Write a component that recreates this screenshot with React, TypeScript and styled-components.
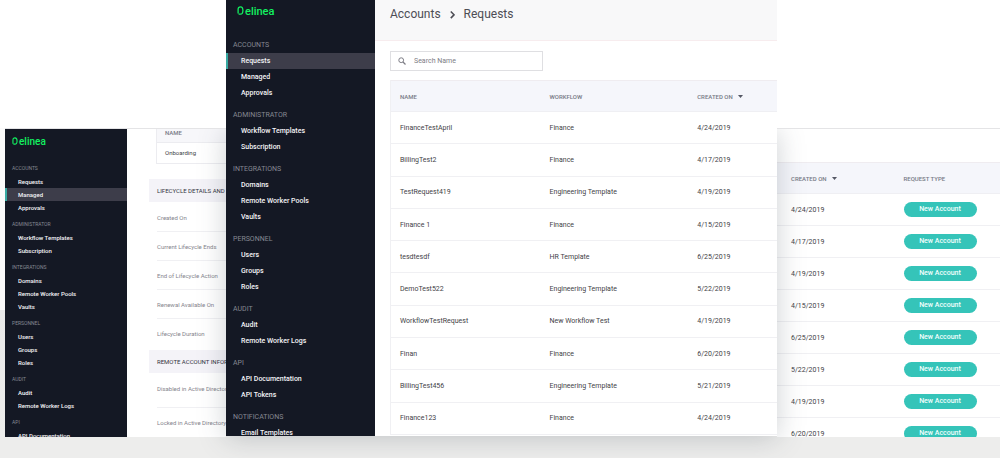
import React from "react";
import styled, { createGlobalStyle, css } from "styled-components";

const GlobalStyle = createGlobalStyle`
  *, *::before, *::after { box-sizing: border-box; }
  html, body { margin: 0; }
  body {
    font-family: Roboto, "Liberation Sans", sans-serif;
    background: #ededec;
    overflow: hidden;
  }
`;

const Stage = styled.main`
  display: grid;
  grid-template-columns: minmax(0, 221fr) minmax(0, 551fr) minmax(0, 223fr);
  align-items: end;
  padding: 0 0 21px 5px;
  background: linear-gradient(#ffffff 128px, #fbfbfb 128px, #fbfbfb 310px, #e9e9e9 310px, #ededec 437px);
`;

const Window = styled.section<{ $front?: boolean }>`
  display: flex;
  overflow: hidden;
  background: #ffffff;
  height: 309px;
  border-top: 1px solid #e4e4e6;
  ${(p) =>
    p.$front &&
    css`
      position: relative;
      z-index: 1;
      overflow: visible;
      height: 436px;
      border-top: 0;
      margin-bottom: 1px;

      /* The shadow only falls on the windows behind, not on the page above them. */
      &::before {
        content: "";
        position: absolute;
        inset: 129px 0 0;
        z-index: -1;
        box-shadow: 0 2px 26px rgba(60, 75, 85, 0.26);
        clip-path: inset(0 -40px -40px -40px);
      }
    `}
`;

const Sidebar = styled.aside<{ $compact?: boolean }>`
  flex: none;
  overflow: hidden;
  width: ${(p) => (p.$compact ? 122 : 149)}px;
  background: #141824;
  padding-top: ${(p) => (p.$compact ? 6 : 5)}px;
`;

const Brand = styled.a<{ $compact?: boolean }>`
  display: flex;
  align-items: baseline;
  gap: 1px;
  height: 14px;
  margin: ${(p) => (p.$compact ? "0 0 13px 7px" : "0 0 18px 11px")};
  color: #12f160;
  font-size: ${(p) => (p.$compact ? 10 : 11)}px;
  font-weight: 500;
  line-height: 14px;
  text-decoration: none;
`;

const BrandMark = styled.svg<{ $compact?: boolean }>`
  flex: none;
  width: ${(p) => (p.$compact ? 6 : 7)}px;
  height: ${(p) => (p.$compact ? 8 : 9)}px;
`;

const NavGroup = styled.nav<{ $compact?: boolean }>`
  display: flex;
  flex-direction: column;
  margin-bottom: ${(p) => (p.$compact ? 4 : 6)}px;
`;

const NavTitle = styled.h2<{ $compact?: boolean }>`
  margin: 0;
  padding-left: 7px;
  font-size: ${(p) => (p.$compact ? 5 : 7)}px;
  font-weight: 400;
  line-height: ${(p) => (p.$compact ? 13 : 16)}px;
  color: #858892;
`;

const NavLink = styled.a<{ $compact?: boolean; $active?: boolean }>`
  padding-left: ${(p) => (p.$compact ? 11 : 13)}px;
  border-left: 2px solid ${(p) => (p.$active ? "#37a9a2" : "transparent")};
  background: ${(p) => (p.$active ? "#3d3d4a" : "transparent")};
  font-size: ${(p) => (p.$compact ? 6 : 7)}px;
  font-weight: 500;
  line-height: ${(p) => (p.$compact ? 13 : 16)}px;
  color: #f4f4f7;
  text-decoration: none;
  white-space: nowrap;
`;

const Content = styled.div`
  flex: 1;
  min-width: 0;
`;

const Heading = styled.header`
  display: flex;
  align-items: flex-start;
  gap: 9px;
  height: 41px;
  padding: 7px 15px;
  background: #f8f8f9;
  border-bottom: 1px solid #f7ecee;
  color: #4d4d55;
  font-size: 12px;
  line-height: 15px;
`;

const Crumb = styled.span``;

const Chevron = styled.svg`
  width: 5px;
  height: 15px;
`;

const SearchBox = styled.label`
  display: flex;
  align-items: center;
  gap: 8px;
  width: 153px;
  height: 20px;
  margin: 10px 0 9px 15px;
  padding: 0 7px;
  border: 1px solid #dfdfe2;
  color: #7d7d85;
`;

const SearchIcon = styled.svg`
  flex: none;
  width: 8px;
  height: 8px;
`;

const SearchInput = styled.input`
  flex: 1;
  min-width: 0;
  padding: 0;
  border: 0;
  outline: 0;
  background: transparent;
  font: 400 7px/16px Roboto, sans-serif;
  color: #55555d;
  &::placeholder { color: #7d7d85; opacity: 1; }
`;

const DataTable = styled.table<{ $inset?: boolean }>`
  width: 100%;
  table-layout: fixed;
  border-collapse: separate;
  border-spacing: 0;
  ${(p) =>
    p.$inset &&
    css`
      width: calc(100% - 15px);
      height: 355px;
      margin-left: 15px;
      border-left: 1px solid #f0f0f3;
    `}
`;

const Th = styled.th<{ $width?: string; $pad: number }>`
  width: ${(p) => p.$width ?? "auto"};
  height: 32px;
  padding: 0 0 0 ${(p) => p.$pad}px;
  background: #f5f6fb;
  border-top: 1px solid #efecf0;
  border-bottom: 1px solid #efeff3;
  text-align: left;
  font-size: 6px;
  font-weight: 500;
  color: #777a86;
  white-space: nowrap;
`;

const Td = styled.td<{ $pad: number }>`
  height: 32px;
  padding: 0 0 0 ${(p) => p.$pad}px;
  border-bottom: 1px solid #f0f0f3;
  font-size: 7px;
  color: #3f3f47;
  white-space: nowrap;
`;

const SortArrow = styled.svg`
  width: 5px;
  height: 3px;
  margin-left: 4px;
  vertical-align: middle;
`;

const Pill = styled.button`
  display: block;
  width: 73px;
  height: 15px;
  padding: 0;
  border: 0;
  border-radius: 8px;
  background: #35c4b9;
  color: #f2fffd;
  font: 500 7px/15px Roboto, sans-serif;
`;

const Toolbar = styled.div`
  height: 33px;
`;

const Details = styled.div`
  flex: 1;
  min-width: 0;
  padding-left: 22px;
  white-space: nowrap;
`;

const MiniTable = styled.table`
  width: calc(100% - 7px);
  margin-left: 7px;
  border-spacing: 0;
  border-left: 1px solid #ececf0;
  font-size: 6px;
  text-align: left;
  color: #3f3f47;
`;

const MiniHead = styled.th`
  height: 14px;
  padding: 0 0 6px 8px;
  background: #f7f7fa;
  border-bottom: 1px solid #ececf0;
  font-weight: 500;
  line-height: 7px;
  color: #777a86;
`;

const MiniCell = styled.td`
  height: 21px;
  padding: 0 0 2px 8px;
  border-bottom: 1px solid #ececf0;
`;

const SectionTitle = styled.h3<{ $spaced?: boolean }>`
  margin: ${(p) => (p.$spaced ? "15px 0 0" : "0")};
  padding-left: 8px;
  background: #f4f3f8;
  font-size: 6px;
  font-weight: 400;
  line-height: 23px;
  color: #33333d;
`;

const FieldList = styled.ul`
  margin: 0;
  padding: 1px 0 2px 8px;
  list-style: none;
`;

const Field = styled.li<{ $tall?: boolean }>`
  height: ${(p) => (p.$tall ? 34 : 29)}px;
  border-bottom: 1px solid #f0f0f3;
  font-size: 6px;
  line-height: 29px;
  color: #85858d;
  &:last-child { border-bottom: 0; }
`;

const groups = [
  { title: "ACCOUNTS", items: ["Requests", "Managed", "Approvals"] },
  { title: "ADMINISTRATOR", items: ["Workflow Templates", "Subscription"] },
  { title: "INTEGRATIONS", items: ["Domains", "Remote Worker Pools", "Vaults"] },
  { title: "PERSONNEL", items: ["Users", "Groups", "Roles"] },
  { title: "AUDIT", items: ["Audit", "Remote Worker Logs"] },
  { title: "API", items: ["API Documentation", "API Tokens"] },
  { title: "NOTIFICATIONS", items: ["Email Templates"] },
];

const compactGroups = [
  ...groups.slice(0, 5),
  { title: "API", items: ["API Documentation"] },
];

const requests = [
  ["FinanceTestApril", "Finance", "4/24/2019"],
  ["BillingTest2", "Finance", "4/17/2019"],
  ["TestRequest419", "Engineering Template", "4/19/2019"],
  ["Finance 1", "Finance", "4/15/2019"],
  ["tesdtesdf", "HR Template", "6/25/2019"],
  ["DemoTest522", "Engineering Template", "5/22/2019"],
  ["WorkflowTestRequest", "New Workflow Test", "4/19/2019"],
  ["Finan", "Finance", "6/20/2019"],
  ["BillingTest456", "Engineering Template", "5/21/2019"],
  ["Finance123", "Finance", "4/24/2019"],
];

function SideNav({ compact, active }: { compact?: boolean; active: string }) {
  const shown = compact ? compactGroups : groups;
  return (
    <Sidebar $compact={compact}>
      <Brand href="#" aria-label="Delinea" $compact={compact}>
        <BrandMark $compact={compact} viewBox="0 0 7 9" aria-hidden="true">
          <path
            d="M1.1 7.6V3.4C1.1 1.8 2 .9 3.5 .9C5.1 .9 5.9 2.3 5.9 4.6S5.1 8.2 3.4 8.2H1.6"
            fill="none"
            stroke="currentColor"
            strokeWidth="1.3"
          />
        </BrandMark>
        elinea
      </Brand>
      {shown.map((g) => (
        <NavGroup key={g.title} $compact={compact} aria-label={g.title}>
          <NavTitle $compact={compact}>{g.title}</NavTitle>
          {g.items.map((item) => (
            <NavLink key={item} href="#" $compact={compact} $active={item === active}>
              {item}
            </NavLink>
          ))}
        </NavGroup>
      ))}
    </Sidebar>
  );
}

function Sort() {
  return (
    <SortArrow viewBox="0 0 5 3" aria-hidden="true">
      <path d="M0 0H5L2.5 3Z" fill="#555865" />
    </SortArrow>
  );
}

export default function App() {
  return (
    <>
      <GlobalStyle />
      <Stage>
        <Window aria-label="Managed account">
          <SideNav compact active="Managed" />
          <Details>
            <MiniTable>
              <thead>
                <tr><MiniHead>NAME</MiniHead></tr>
              </thead>
              <tbody>
                <tr><MiniCell>Onboarding</MiniCell></tr>
              </tbody>
            </MiniTable>
            <SectionTitle $spaced>LIFECYCLE DETAILS AND ACTIONS</SectionTitle>
            <FieldList>
              <Field>Created On</Field>
              <Field>Current Lifecycle Ends</Field>
              <Field>End of Lifecycle Action</Field>
              <Field>Renewal Available On</Field>
              <Field>Lifecycle Duration</Field>
            </FieldList>
            <SectionTitle>REMOTE ACCOUNT INFORMATION</SectionTitle>
            <FieldList>
              <Field $tall>Disabled in Active Directory</Field>
              <Field $tall>Locked in Active Directory</Field>
            </FieldList>
          </Details>
        </Window>

        <Window $front aria-label="Account requests">
          <SideNav active="Requests" />
          <Content>
            <Heading>
              <Crumb>Accounts</Crumb>
              <Chevron viewBox="0 0 5 15" aria-hidden="true">
                <path d="M0.8 4.5L4 7.8L0.8 11.1" fill="none" stroke="currentColor" strokeWidth="1.6" />
              </Chevron>
              <Crumb>Requests</Crumb>
            </Heading>
            <SearchBox>
              <SearchIcon viewBox="0 0 8 8" aria-hidden="true">
                <circle cx="3.2" cy="3.2" r="2.4" fill="none" stroke="currentColor" strokeWidth="1" />
                <path d="M5 5L7.5 7.5" stroke="currentColor" strokeWidth="1.3" />
              </SearchIcon>
              <SearchInput type="text" placeholder="Search Name" aria-label="Search Name" />
            </SearchBox>
            <DataTable $inset>
              <thead>
                <tr>
                  <Th $pad={9} $width="39%">NAME</Th>
                  <Th $pad={8} $width="38%">WORKFLOW</Th>
                  <Th $pad={9}>CREATED ON <Sort /></Th>
                </tr>
              </thead>
              <tbody>
                {requests.map((r) => (
                  <tr key={r[0]}>
                    <Td $pad={9}>{r[0]}</Td>
                    <Td $pad={8}>{r[1]}</Td>
                    <Td $pad={9}>{r[2]}</Td>
                  </tr>
                ))}
              </tbody>
            </DataTable>
          </Content>
        </Window>

        <Window aria-label="Request types">
          <Content>
            <Toolbar />
            <DataTable>
              <thead>
                <tr>
                  <Th $pad={14} $width="50%">CREATED ON <Sort /></Th>
                  <Th $pad={15}>REQUEST TYPE</Th>
                </tr>
              </thead>
              <tbody>
                {requests.slice(0, 8).map((r) => (
                  <tr key={r[0]}>
                    <Td $pad={14}>{r[2]}</Td>
                    <Td $pad={15}><Pill type="button">New Account</Pill></Td>
                  </tr>
                ))}
              </tbody>
            </DataTable>
          </Content>
        </Window>
      </Stage>
    </>
  );
}
